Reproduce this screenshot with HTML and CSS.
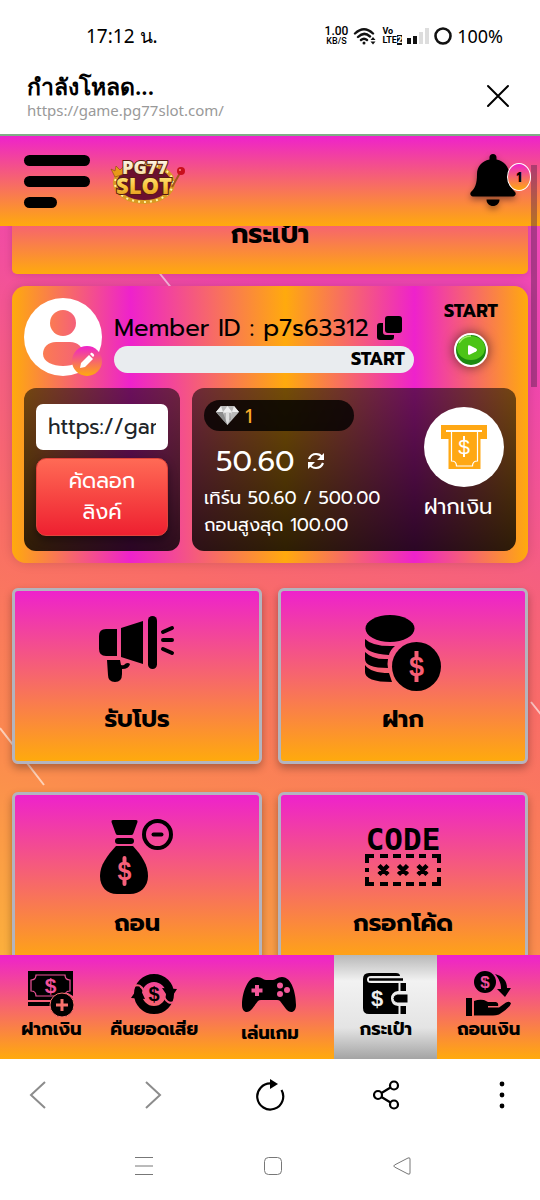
FILE: index.html
```html
<!DOCTYPE html>
<html lang="th">
<head>
  <meta charset="UTF-8" />
  <meta name="viewport" content="width=device-width, initial-scale=1.0" />
  <title>PG77 Slot</title>
  <link rel="stylesheet" href="styles.css">
</head>
<body>

<!-- Phone status bar -->
<div class="status-bar">
  <span class="clock">17:12 น.</span>
  <div class="status-right">
    <span class="speed">1.00<small>KB/S</small></span>
    <svg width="24" height="20" viewBox="0 0 24 20" fill="none" stroke="#111" stroke-width="2.4" stroke-linecap="round">
      <path d="M2 7.500Q11-1 20 7.500M5 11Q11 5 17 10.500M8 14Q11 11.500 14 14"/>
      <circle cx="11" cy="17" r="1.500" fill="#111" stroke="none"/>
      <path d="M17.500 14l2.500-3 2.500 3zM17.500 15.500l2.500 3 2.500-3z" fill="#111" stroke="none"/>
    </svg>
    <span class="volte">Vo<br>LTE<b>2</b></span>
    <svg width="22" height="16" viewBox="0 0 22 16">
      <path d="M0 10h4v6H0zM6 8h4v8H6z" fill="#111"/>
      <path d="M12 4h4v12h-4zM18 0h4v16h-4z" fill="#ddd"/>
    </svg>
    <svg width="18" height="18" viewBox="0 0 18 18"><circle cx="9" cy="9" r="7.500" fill="none" stroke="#111" stroke-width="2.600"/></svg>
    <span class="battery">100%</span>
  </div>
</div>

<!-- In-app browser title -->
<div class="address-bar">
  <div>
    <div class="page-title">กำลังโหลด...</div>
    <div class="page-url">https://game.pg77slot.com/</div>
  </div>
  <button class="icon-btn" aria-label="Close">
    <svg width="24" height="24" viewBox="0 0 24 24" stroke="#000" stroke-width="2" stroke-linecap="round"><path d="M2 2l20 20M22 2L2 22"/></svg>
  </button>
</div>

<header class="header">
  <button class="menu-btn" aria-label="Menu"><i></i><i></i><i></i></button>
  <a href="#" class="logo" aria-label="PG77 Slot">
    <svg width="76" height="50" viewBox="0 0 76 50">
      <defs>
        <linearGradient id="gold" x1="0" y1="0" x2="0" y2="1">
          <stop offset="0" stop-color="#fff3a8"/><stop offset=".55" stop-color="#f9c53a"/><stop offset="1" stop-color="#d98a14"/>
        </linearGradient>
        <linearGradient id="silver" x1="0" y1="0" x2="0" y2="1">
          <stop offset="0" stop-color="#fff"/><stop offset="1" stop-color="#f3d590"/>
        </linearGradient>
      </defs>
      <ellipse cx="34" cy="27" rx="29" ry="19" fill="#6b1030" stroke="#d99a22" stroke-width="4"/>
      <ellipse cx="34" cy="27" rx="29" ry="19" fill="none" stroke="#fff2a0" stroke-width="2" stroke-dasharray="2 4"/>
      <path d="M62 31l8-14" stroke="#a3561c" stroke-width="2"/>
      <circle cx="71" cy="15" r="4" fill="#c8101c"/><circle cx="70" cy="14" r="1" fill="#ff8a8a"/>
      <path d="M1 13l4 2 1-5 4 4 4-4 0 8-9 3z" fill="#e89a18" stroke="#8a4a08" stroke-width=".6"/>
      <text x="35" y="18" class="logo-small" fill="url(#silver)">PG77</text>
      <text x="34" y="38" class="logo-big" fill="url(#gold)">SLOT</text>
    </svg>
  </a>
  <button class="bell-btn" aria-label="Notifications">
    <svg width="46" height="54" viewBox="0 0 46 54">
      <path d="M23 0c-2.200 0-3.500 1.500-3.500 3.500v2C11.500 7 7 13 7 20c0 10-2 14-6 18-1.500 1.600-.5 4.500 2 4.500h40c2.500 0 3.500-2.900 2-4.500-4-4-6-8-6-18 0-7-4.500-13-12.500-14.500v-2C26.500 1.500 25.200 0 23 0z"/>
      <path d="M16.500 45.500h13c0 4-3 6.500-6.500 6.500s-6.500-2.500-6.500-6.500z"/>
    </svg>
    <span class="badge">1</span>
  </button>
</header>

<main class="content">
  <svg class="streaks" width="540" height="729" viewBox="0 0 540 729" stroke="#fff" stroke-opacity=".6" stroke-width="2">
    <path d="M157 44l16 20M0 502l44 57M531 476l12 15"/>
  </svg>

  <h1 class="title-card">กระเป๋า</h1>

  <section class="profile">
    <div class="profile-top">
      <div class="avatar">
        <svg width="78" height="78" viewBox="0 0 78 78">
          <defs>
            <linearGradient id="brand" x1="0" y1="0" x2="0" y2="1"><stop offset="0" stop-color="#ee22cc"/><stop offset="1" stop-color="#ffaa0d"/></linearGradient>
            <linearGradient id="skin" x1="0" y1="0" x2="1" y2="0"><stop offset="0" stop-color="#fb7b52"/><stop offset="1" stop-color="#f4607a"/></linearGradient>
          </defs>
          <circle cx="39" cy="39" r="39" fill="#fff"/>
          <circle cx="39" cy="25" r="13" fill="url(#skin)"/>
          <path d="M32 44h14c8 0 13 5 13 12 0 8-10 12-20 12s-20-4-20-12c0-7 5-12 13-12z" fill="url(#skin)"/>
          <circle cx="63" cy="63" r="15" fill="url(#brand)"/>
          <path d="M56 70l1-5 8-8 4 4-8 8zM66 56l1-1c1-1 4 2 3 3l-1 1z" fill="#fff"/>
        </svg>
      </div>
      <div class="member">
        <div class="member-id">
          Member ID : p7s63312
          <button class="icon-btn" aria-label="Copy">
            <svg width="25" height="24" viewBox="0 0 25 24"><rect x="8" y="0" width="17" height="17" rx="3"/><path d="M6 7H3a3 3 0 0 0-3 3v11a3 3 0 0 0 3 3h11a3 3 0 0 0 3-3v-2H9a3 3 0 0 1-3-3z"/></svg>
          </button>
        </div>
        <div class="progress">START</div>
      </div>
      <div class="start">
        <span>START</span>
        <button class="play-btn" aria-label="Start">
          <svg width="34" height="34" viewBox="0 0 34 34">
            <circle cx="17" cy="17" r="16" fill="#1c8a10" stroke="#fff" stroke-width="2"/>
            <ellipse cx="17" cy="15" rx="14" ry="12" fill="#4cc417"/>
            <path d="M5 10q4-7 12-7" stroke="#a5ef6a" stroke-width="1.500" fill="none"/>
            <path d="M14 13.500q0-2 2-1l6 3q2 1.500 0 3l-6 3q-2 1-2-1z" fill="#fff"/>
          </svg>
        </button>
      </div>
    </div>

    <div class="profile-bottom">
      <div class="panel link-panel">
        <input type="text" aria-label="Link" value="https://game.pg77slot.com/" readonly>
        <button class="copy-link">คัดลอก<br>ลิงค์</button>
      </div>
      <div class="panel wallet">
        <div class="wallet-info">
          <div class="gems">
            <svg width="23" height="19" viewBox="0 0 23 19">
              <path d="M5 0h13l5 6-11.500 13L0 6z" fill="#b9b9b9"/>
              <path d="M5 0l2 6-7 0zM11.500 0L16 6H7zM18 0l5 6h-7z" fill="#eee"/>
              <path d="M7 6l4.500 13L0 6z" fill="#8c8c8c"/><path d="M7 6h9l-4.500 13z" fill="#dedede"/>
              <path d="M9 7v7M14 7v7" stroke="#888"/>
            </svg>
            <span>1</span>
          </div>
          <div class="amount">
            50.60
            <button class="icon-btn" aria-label="Refresh">
              <svg width="18" height="18" viewBox="0 0 18 18" fill="none" stroke="#fff" stroke-width="2.200">
                <path d="M2 7Q4 2 9 2q4 0 6 3M16 11q-2 5-7 5-4 0-6-3"/>
                <path d="M17 1v7h-7zM1 17v-7h7z" fill="#fff" stroke="none"/>
              </svg>
            </button>
          </div>
          <p>เทิร์น 50.60 / 500.00</p>
          <p>ถอนสูงสุด 100.00</p>
        </div>
        <a href="#" class="deposit">
          <span class="deposit-circle">
            <svg width="46" height="44" viewBox="0 0 46 44">
              <path d="M0 0h46v14h-6.500v30h-32V14H0z" fill="#ffa814"/>
              <path d="M5 6h36" stroke="#fff" stroke-width="2"/>
              <path d="M10.500 6v30q5 0 5 5h16q0-5 5-5V6" fill="none" stroke="#fff" stroke-width="1.200"/>
              <path d="M23 11v4M23 28v4" stroke="#fff" stroke-width="2"/>
              <text x="23" y="29" class="dollar thin" font-size="21" fill="#fff">$</text>
            </svg>
          </span>
          ฝากเงิน
        </a>
      </div>
    </div>
  </section>

  <nav class="cards">
    <a href="#" class="card">
      <svg width="76" height="76" viewBox="0 0 76 76">
        <path d="M7 14h11v27H7q-7 0-7-7V21q0-7 7-7zM22 13l22-7v43l-22-7z"/>
        <rect x="49" y="1" width="9" height="53" rx="4.500"/>
        <path d="M8 45h13l1 5q3 1 4-1 3-2 5 0-1 5-8 5v5q0 8-7 8t-7-7z"/>
        <path d="M64 17l9-4M64 25h9M64 34l9 4" stroke="#000" stroke-width="4" stroke-linecap="round"/>
      </svg>
      <span>รับโปร</span>
    </a>
    <a href="#" class="card">
      <svg width="76" height="76" viewBox="0 0 76 76">
        <ellipse cx="25" cy="13.500" rx="24.500" ry="13.500"/>
        <path d="M0 24q8 8 30 7-5 4-6 9Q0 38 0 30zM0 37q8 8 23 7-1 5 0 9Q0 53 0 44zM0 50q6 8 24 8l3 9Q0 67 0 57z"/>
        <circle cx="51.500" cy="51.500" r="24.500"/>
        <path d="M51.500 36v6M51.500 61v6" stroke="#f75f75" stroke-width="4"/>
        <text x="51.500" y="61" class="dollar" font-size="27" fill="#f75f75">$</text>
      </svg>
      <span>ฝาก</span>
    </a>
    <a href="#" class="card">
      <svg width="76" height="76" viewBox="0 0 76 76">
        <path d="M14 1h23q2 0 1.500 2l-4 11q-.5 2-2 2h-14q-1.500 0-2-2l-4-11Q12 1 14 1z"/>
        <rect x="16" y="19" width="19" height="6" rx="3"/>
        <path d="M17 27h17c9 10 15 19 15 30 0 11-8 18-18 18H18C8 75 1 68 1 57c0-11 7-20 16-30z"/>
        <circle cx="58.500" cy="15.500" r="13.500" fill="none" stroke="#000" stroke-width="4"/>
        <path d="M54.500 15.500h8" stroke="#000" stroke-width="4" stroke-linecap="round"/>
        <path d="M25.500 39v5M25.500 60v5" stroke="#f7607a" stroke-width="4" stroke-linecap="round"/>
        <text x="25.500" y="61" class="dollar" font-size="25" fill="#f7607a">$</text>
      </svg>
      <span>ถอน</span>
    </a>
    <a href="#" class="card">
      <svg width="76" height="76" viewBox="0 0 76 76">
        <text x="38" y="31" class="code-text">CODE</text>
        <path d="M2 44v-7h7M15 37h8M28 37h8M41 37h8M54 37h7M67 37h7v7M2 49v4M74 49v4M2 58v7h7M15 65h8M28 65h8M41 65h8M54 65h7M67 65h7v-7" fill="none" stroke="#000" stroke-width="4"/>
        <path d="M14 46.500l9 9m0-9l-9 9M33.500 46.500l9 9m0-9l-9 9M53 46.500l9 9m0-9l-9 9" stroke="#000" stroke-width="4.500"/>
      </svg>
      <span>กรอกโค้ด</span>
    </a>
  </nav>
</main>

<nav class="bottom-nav">
  <a href="#">
    <svg width="46" height="46" viewBox="0 0 46 46">
      <path d="M0 0h45v25l-5-3q-6-1-10 2-3 2-4 5H0zM0 31h24l-1 4H0z"/>
      <path d="M8 4h29q0 5 5 5v11q-5 0-5 5H8q0-5-5-5V9q5 0 5-5z" fill="none" stroke="#f1529a" stroke-width="1.200"/>
      <text x="22.500" y="22" class="dollar" font-size="21" fill="#f1529a">$</text>
      <circle cx="34" cy="34" r="12" stroke="#f6716c"/>
      <path d="M34 28v12M28 34h12" stroke="#f6716c" stroke-width="3"/>
    </svg>
    <span>ฝากเงิน</span>
  </a>
  <a href="#">
    <svg width="46" height="46" viewBox="0 0 46 46">
      <circle cx="23" cy="23" r="16" fill="none" stroke="#000" stroke-width="8"/>
      <path d="M3 15q6-3 10 5l4 1M43 31q-6 3-10-5l-4-1" fill="none" stroke="#f3597f" stroke-width="2"/>
      <path d="M8 15L0 27l14 1zM46 18l-15-1 8 12z"/>
      <text x="23" y="30" class="dollar" font-size="20">$</text>
    </svg>
    <span>คืนยอดเสีย</span>
  </a>
  <a href="#" class="play">
    <svg width="55" height="46" viewBox="0 0 55 46">
      <path d="M15 2c5 0 6 3 9 3h7c3 0 4-3 9-3 10 0 14 17 14 28 0 8-6 9-10 4l-6-8q-1-1-3-1H19q-2 0-3 1l-6 8C6 39 0 38 0 30 0 19 5 2 15 2z"/>
      <path d="M15 10v11M9.500 15.500h11" stroke="#f3589a" stroke-width="4"/>
      <g fill="#f3589a"><circle cx="38" cy="10.500" r="3"/><circle cx="38" cy="19" r="3"/><circle cx="45" cy="15" r="3"/></g>
    </svg>
    <span>เล่นเกม</span>
  </a>
  <a href="#" class="active">
    <svg width="46" height="46" viewBox="0 0 46 46">
      <path d="M6 2h27q4 0 4 3H8q-4 0-4 3.500T8 12h35v8h-8q-7 1-7 7.500t7 7.500h8v8H6q-6 0-6-6V8q0-6 6-6z"/>
      <path d="M6 8.500h34" stroke="#000" stroke-width="2.500"/>
      <path d="M36.500 10v34" stroke="#eee" stroke-width="2"/>
      <path d="M34 23h11v9H34q-4-1-4-4.500t4-4.500z" stroke="#eee"/>
      <text x="14" y="35" class="dollar" font-size="22" fill="#eee">$</text>
    </svg>
    <span>กระเป๋า</span>
  </a>
  <a href="#">
    <svg width="46" height="46" viewBox="0 0 46 46">
      <circle cx="19" cy="11" r="11"/>
      <text x="19" y="17" class="dollar" font-size="17" fill="#f2509c">$</text>
      <path d="M29 3c8 2 12 7 12 14h4l-6 9-8-8h4c0-6-2-10-6-15zM0 27h6v18H0z"/>
      <path d="M8 30q5-2 10-1l4 2h8q3 1 2 4H22v1.500h11l7-5q4-2 5 1-2 5-12 11-3 1-6 1H8z"/>
    </svg>
    <span>ถอนเงิน</span>
  </a>
</nav>

<!-- Browser controls -->
<div class="browser-bar">
  <button class="icon-btn" aria-label="Back"><svg width="28" height="28" viewBox="0 0 28 28" fill="none" stroke="#8c8c8c" stroke-width="2"><path d="M21 1L7 14l14 13"/></svg></button>
  <button class="icon-btn" aria-label="Forward"><svg width="28" height="28" viewBox="0 0 28 28" fill="none" stroke="#8c8c8c" stroke-width="2"><path d="M7 1l14 13L7 27"/></svg></button>
  <button class="icon-btn" aria-label="Reload"><svg width="32" height="32" viewBox="0 0 32 32"><path d="M17 4.500A13 13 0 1 0 27.500 11" fill="none" stroke="#000" stroke-width="2.200"/><path d="M16 0v10l8-5z"/></svg></button>
  <button class="icon-btn" aria-label="Share"><svg width="28" height="30" viewBox="0 0 28 30" fill="none" stroke="#000" stroke-width="2.200"><circle cx="5" cy="15" r="4"/><circle cx="21" cy="5.500" r="4"/><circle cx="21" cy="24.500" r="4"/><path d="M8.500 13l9-5.500M8.500 17l9 5.500"/></svg></button>
  <button class="icon-btn" aria-label="More"><svg width="28" height="28" viewBox="0 0 28 28"><circle cx="14" cy="3" r="2.400"/><circle cx="14" cy="14" r="2.400"/><circle cx="14" cy="25" r="2.400"/></svg></button>
</div>

<!-- Android navigation -->
<div class="system-bar">
  <button class="icon-btn" aria-label="Recent apps"><svg width="20" height="20" viewBox="0 0 20 20" stroke="#777"><path d="M1 1.500h18M1 10h18M1 18.500h18"/></svg></button>
  <button class="icon-btn" aria-label="Home"><svg width="20" height="20" viewBox="0 0 20 20" fill="none" stroke="#777"><rect x="1.500" y="1.500" width="17" height="17" rx="4"/></svg></button>
  <button class="icon-btn" aria-label="Go back"><svg width="20" height="20" viewBox="0 0 20 20" fill="none" stroke="#777" stroke-linejoin="round"><path d="M2.500 9L16 2q2-.8 2 1v14q0 1.800-2 1L2.500 11q-1.500-1 0-2z"/></svg></button>
</div>

<div class="scroll-thumb"></div>

</body>
</html>
```
FILE: styles.css
```css
* { box-sizing: border-box; }
body {
  font-family: "Prompt", "Noto Sans", sans-serif;
  margin: 0; color: #000; background: #fff;
  display: flex; flex-direction: column;
  height: 100vh; position: relative;
}
a { color: inherit; text-decoration: none; }
button { font-family: inherit; color: inherit; border: none; background: none; padding: 0; cursor: pointer; }
svg { display: block; flex-shrink: 0; }
.icon-btn { display: inline-block; }
.dollar { font-family: "Liberation Sans", sans-serif; font-weight: bold; text-anchor: middle; }
.thin { font-weight: normal; }

/* status bar */
.status-bar {
  height: 72px; padding: 0 37px 0 86px;
  font-family: "Noto Sans", sans-serif;
  display: flex; align-items: center; justify-content: space-between;
}
.clock { font-size: 19px; }
.status-right { display: flex; align-items: center; gap: 5px; }
.speed { font-family: Roboto, sans-serif; font-size: 12px; line-height: 11px; font-weight: 500; text-align: center; }
.speed small { display: block; font-size: 9px; line-height: 9px; }
.volte { font-family: Roboto, sans-serif; font-size: 9px; line-height: 9px; font-weight: bold; }
.volte b { background: #111; color: #fff; }
.battery { font-size: 18px; }

.address-bar {
  height: 64px; padding: 0 30px 0 27px;
  font-family: "Noto Sans", sans-serif;
  display: flex; align-items: flex-start; justify-content: space-between;
  border-bottom: 2px solid #7fae86;
}
.address-bar .icon-btn { margin-top: 12px; }
.page-title { font-size: 23px; line-height: 28px; font-weight: 600; }
.page-url { font-size: 15px; line-height: 20px; color: #999; }

/* site header */
.header {
  height: 90px; padding: 0 24px;
  display: flex; align-items: center;
  background: linear-gradient(#ee22cc, #ffaa0d);
}
.menu-btn { display: flex; flex-direction: column; gap: 10px; width: 66px; }
.menu-btn i { height: 11px; border-radius: 6px; background: #000; }
.menu-btn i:last-child { width: 33px; }
.logo { margin-left: 20px; }
.logo-small, .logo-big { font-family: "Open Sans", sans-serif; font-weight: 800; text-anchor: middle; stroke: #5a1a10; stroke-width: 2; paint-order: stroke; }
.logo-small { font-size: 18px; }
.logo-big { font-size: 22px; }
.bell-btn { margin-left: auto; position: relative; }
.bell-btn svg { filter: drop-shadow(0 3px 3px rgba(0,0,0,0.4)); }
.badge {
  position: absolute; top: 9px; right: -15px;
  width: 24px; height: 28px; border-radius: 50%;
  border: 1px solid #fff; background: linear-gradient(#ee22cc, #ffaa0d);
  font-size: 13px; line-height: 28px; font-weight: bold;
}

/* page content */
.content {
  flex: 1; min-height: 0; overflow: hidden; position: relative;
  padding: 0 12px;
  background: linear-gradient(200deg, #f04ab8 0%, #f045b0 16%, #f55f80 38%, #f96c68 52%, #fb8850 76%, #fbb03c 100%);
}
.streaks { position: absolute; top: 0; left: 0; }
.title-card {
  position: relative; margin: -46px 0 12px; padding: 38px 0 24px;
  border-radius: 5px; background: linear-gradient(#ee22cc, #ffaa0d);
  font-size: 27px; line-height: 32px; text-align: center;
  box-shadow: 0 0 8px rgba(0,0,0,0.15);
}
.profile {
  position: relative; padding: 12px; border-radius: 14px;
  background: linear-gradient(90deg, #ffaa0d 0%, #ee22cc 23%, #ffaa0d 53%, #ee22cc 78%, #ffaa0d 100%);
  box-shadow: 0 0 12px rgba(0,0,0,0.15);
}
.profile-top { display: grid; grid-template-columns: 78px 1fr 90px; gap: 12px; }
.member { padding-top: 12px; }
.member-id { display: flex; align-items: center; gap: 8px; font-size: 24px; line-height: 36px; white-space: nowrap; }
.progress {
  height: 27px; padding-right: 9px; border-radius: 14px; background: #e9ecef;
  text-align: right; font-size: 18px; line-height: 27px; font-weight: bold;
}
.start { text-align: center; font-size: 18px; line-height: 26px; font-weight: bold; }
.play-btn { display: block; margin: 9px auto 0; border-radius: 50%; box-shadow: 0 0 12px rgba(0,0,0,0.6); }

.profile-bottom { display: grid; grid-template-columns: 156px 1fr; gap: 12px; margin-top: 12px; }
.panel { border-radius: 12px; color: #fff; background: linear-gradient(rgba(0,0,0,0.55), rgba(0,0,0,0.82)); }
.link-panel { padding: 16px 12px 14px; }
.link-panel input {
  display: block; width: 100%; height: 46px; padding: 0 12px;
  border: none; border-radius: 7px; background: #fff;
  font-family: inherit; font-size: 21px; color: #212529;
}
.copy-link {
  display: block; width: 100%; margin-top: 8px; padding: 7px 0;
  border: 1px solid #e0443c; border-radius: 10px;
  background: linear-gradient(#ff6a55, #ee2030);
  font-size: 21px; line-height: 31px; color: #fff;
  box-shadow: 0 4px 8px rgba(0,0,0,0.4);
}
.wallet { display: flex; justify-content: space-between; padding: 12px; }
.gems {
  width: 150px; height: 31px; padding-left: 12px; border-radius: 16px;
  display: flex; align-items: center; gap: 6px;
  background: rgba(0,0,0,0.8); color: #fbab2a; font-size: 20px;
}
.amount { display: flex; align-items: center; gap: 12px; padding: 10px 12px 4px; font-size: 29px; line-height: 40px; }
.wallet p { margin: 0; font-size: 18px; line-height: 27px; white-space: nowrap; }
.deposit { padding-top: 7px; font-size: 21px; line-height: 40px; }
.deposit-circle {
  display: flex; align-items: center; justify-content: center;
  width: 80px; height: 80px; border-radius: 50%; background: #fff;
}

.cards { position: relative; display: grid; grid-template-columns: 1fr 1fr; gap: 28px 16px; margin-top: 25px; }
.card {
  display: flex; flex-direction: column; align-items: center; gap: 13px;
  padding: 24px 0 27px; border: 3px solid #b4b4be; border-radius: 6px;
  background: linear-gradient(#ee22cc, #ffaa0d);
  box-shadow: 0 4px 8px rgba(0,0,0,0.3);
  font-size: 24px; line-height: 30px; font-weight: bold;
}
.code-text { font: bold 31px "DejaVu Sans Mono", monospace; text-anchor: middle; }

/* bottom menu */
.bottom-nav {
  display: grid; grid-template-columns: 4fr 4fr 5fr 4fr 4fr; height: 104px;
  background: linear-gradient(#ee22cc, #ffaa0d);
}
.bottom-nav a {
  display: flex; flex-direction: column; align-items: center;
  padding-top: 16px; font-size: 18px; line-height: 24px; font-weight: bold;
}
.bottom-nav .play { padding-top: 20px; }
.bottom-nav .active { background: linear-gradient(#b8b8b8, #f2f2f2 25%, #e4e4e4 70%, #a4a4a4); }

.browser-bar { display: flex; justify-content: space-between; align-items: center; height: 72px; padding: 0 24px; }
.system-bar { display: flex; justify-content: center; align-items: center; gap: 109px; height: 69px; padding-left: 6px; }

.scroll-thumb { position: absolute; top: 165px; right: 3px; width: 6px; height: 222px; background: rgba(70,30,70,0.4); }
```
